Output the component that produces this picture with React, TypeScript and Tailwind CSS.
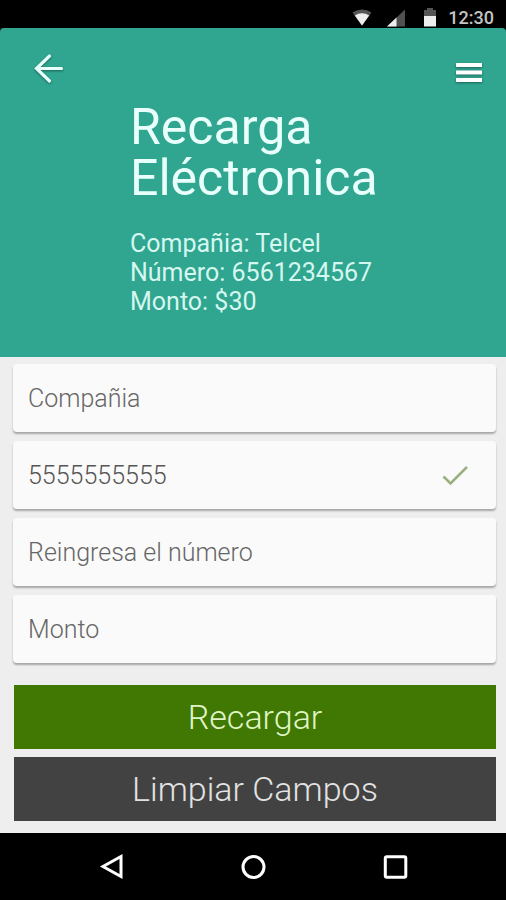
import type { InputHTMLAttributes } from "react";

type FieldProps = InputHTMLAttributes<HTMLInputElement> & {
  label: string;
  valid?: boolean;
};

const details = [
  { term: "Compañia", value: "Telcel" },
  { term: "Número", value: "6561234567" },
  { term: "Monto", value: "$30" }
];

function StatusBar() {
  return (
    <div className="flex h-7 items-end justify-end bg-black pr-3 text-[#c4c4c4]">
      <svg aria-hidden="true" className="mr-3.5 h-7 w-5" viewBox="0 0 20 28">
        <path d="M0.5 12.5Q10 6.5 19.5 12.5L10 25.5Z" fill="#555" />
        <path d="M2.8 15.6Q10 11 17.2 15.6L10 25.5Z" fill="#eee" />
      </svg>
      <svg aria-hidden="true" className="mr-3.5 h-7 w-5" viewBox="0 0 20 28">
        <path d="M1 26.5L19 9.5V26.5Z" fill="#505050" />
        <path d="M1 26.5L10.5 17.5V26.5Z" fill="#eee" />
      </svg>
      <svg aria-hidden="true" className="mr-2 h-7 w-5" viewBox="0 0 20 28">
        <path d="M7 8h6v2h3v7H4v-7h3z" fill="#555" />
        <path d="M4 16h12v10.5H4z" fill="#eee" />
      </svg>
      <span className="text-lg leading-5 font-medium">12:30</span>
    </div>
  );
}

function Header() {
  return (
    <header className="flex items-start rounded-t-sm bg-[#30a590] pt-5 pr-4 pb-[41px] pl-7 text-[#e8fffb]">
      <button aria-label="Atrás" className="size-10 shrink-0" type="button">
        <svg className="size-10 drop-shadow-[0_1px_1px_rgba(0,0,0,0.4)]" fill="none" stroke="currentColor" strokeLinecap="round" strokeWidth="3.2" viewBox="0 0 40 40">
          <path d="M33.5 20.5H8.5M21.5 8L8.5 20.5L21.5 33" />
        </svg>
      </button>

      <div className="ml-[62px] min-w-0 flex-1 pt-[54px]">
        <h1 className="text-[50px] leading-[51px]">
          Recarga
          <br />
          Eléctronica
        </h1>
        <div className="mt-[25px] text-[25px] leading-[29px] text-[#d5f7ef]">
          {details.map((item) => (
            <p key={item.term}>
              {item.term}: {item.value}
            </p>
          ))}
        </div>
      </div>

      <button aria-label="Menú" className="h-12 w-10 shrink-0" type="button">
        <svg className="h-12 w-10 drop-shadow-[0_1px_1px_rgba(0,0,0,0.4)]" fill="#fff" viewBox="0 0 40 48">
          <path d="M6 15h26v4H6zM6 22.5h26v4H6zM6 30h26v4H6z" />
        </svg>
      </button>
    </header>
  );
}

function Field({ label, valid, ...props }: FieldProps) {
  return (
    <div className="flex h-[68px] items-center rounded-sm bg-[#fafafa] px-[15px] shadow-[0_2px_2px_rgba(0,0,0,0.3)]">
      <input
        aria-label={label}
        className="h-full min-w-0 flex-1 bg-transparent text-[25px] font-light text-[#555] outline-none placeholder:text-[#666]"
        {...props}
      />
      {valid && (
        <svg aria-hidden="true" className="mr-3 h-7 w-7" fill="none" stroke="#9bb07f" strokeWidth="2.6" viewBox="0 0 28 28">
          <path d="M2.5 15.5L9.5 22.5L26 6" />
        </svg>
      )}
    </div>
  );
}

function NavBar() {
  return (
    <nav className="flex h-[67px] items-center justify-center bg-black text-white">
      <button aria-label="Volver" className="flex flex-1 justify-end" type="button">
        <svg className="size-8" fill="none" stroke="currentColor" strokeWidth="3" viewBox="0 0 32 32">
          <path d="M26 5.5V25.5L8 15.5Z" />
        </svg>
      </button>
      <button aria-label="Inicio" className="mx-[110px]" type="button">
        <svg className="size-8" fill="none" stroke="currentColor" strokeWidth="3" viewBox="0 0 32 32">
          <circle cx="16.5" cy="16" r="10.5" />
        </svg>
      </button>
      <button aria-label="Recientes" className="flex flex-1" type="button">
        <svg className="size-8" fill="none" stroke="currentColor" strokeWidth="3" viewBox="0 0 32 32">
          <rect height="20.5" rx="1.5" width="20.5" x="6.3" y="5.7" />
        </svg>
      </button>
    </nav>
  );
}

export default function App() {
  return (
    <div className="flex min-h-screen flex-col bg-black font-['Roboto',sans-serif]">
      <StatusBar />
      <Header />

      <form className="flex-1 bg-[#eeeeef] pt-[7px] pr-[10px] pb-3 pl-[13px]" onSubmit={(event) => event.preventDefault()}>
        <div className="flex flex-col gap-[9px]">
          <Field label="Compañia" placeholder="Compañia" />
          <Field defaultValue="5555555555" inputMode="tel" label="Número" valid />
          <Field inputMode="tel" label="Reingresa el número" placeholder="Reingresa el número" />
          <Field inputMode="decimal" label="Monto" placeholder="Monto" />
        </div>

        <div className="mt-[22px] ml-px flex flex-col gap-2">
          <button className="h-16 bg-[#417803] text-[34px] font-light text-[#dff5c4]" type="submit">
            Recargar
          </button>
          <button className="h-16 bg-[#424242] text-[34px] font-light text-[#e2e2e2]" type="reset">
            Limpiar Campos
          </button>
        </div>
      </form>

      <NavBar />
    </div>
  );
}
